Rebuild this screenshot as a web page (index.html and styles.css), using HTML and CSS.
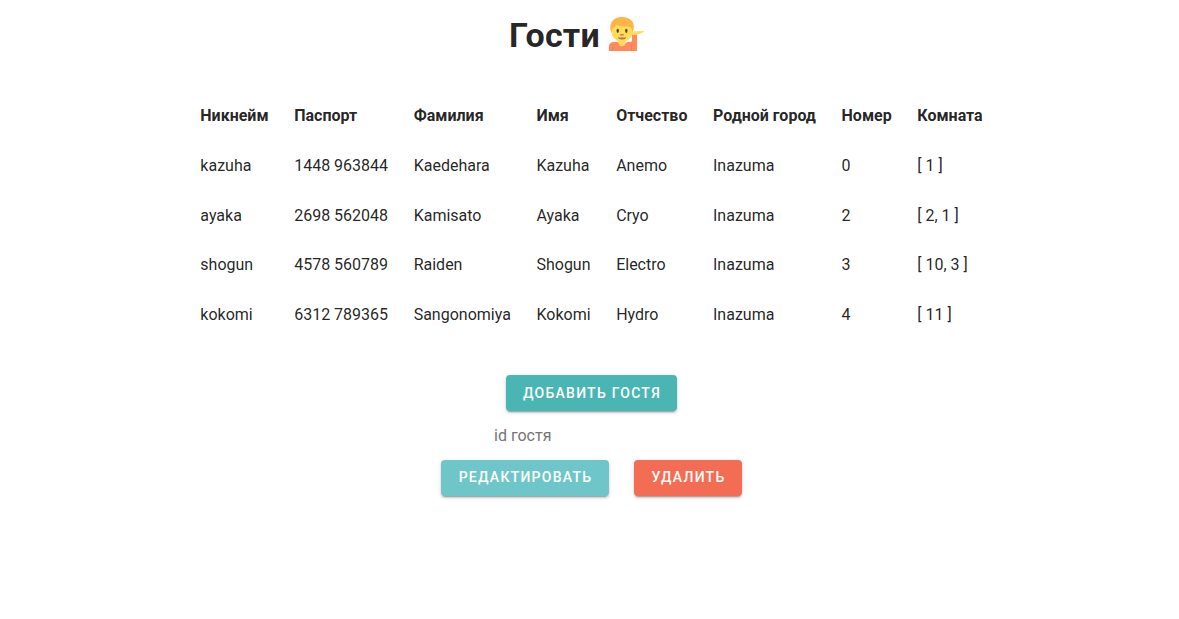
FILE: index.html
```html
<!DOCTYPE html>
<html lang="ru">
<head>
<meta charset="utf-8">
<title>Гости</title>
<link rel="stylesheet" href="styles.css">
</head>
<body>
<main class="page">
  <h1 class="title">Гости
    <svg class="title-icon" viewBox="0 0 36 36" aria-hidden="true">
      <path fill="#ff8a5e" d="M1 35v-4.500C1 27.500 3 26 6 26h3.500l5 3 5-3h3c1.200 0 1.500-.8 1.500-2v-7h5v18z"/>
      <path fill="#f27a52" d="M4.700 31h.9v4h-.9zM23.300 29h.9v6h-.9z"/>
      <path fill="#ffdc5d" d="M10.500 22h7v6c-1.500 3-5.500 3-7 0z"/>
      <path fill="#ffb445" d="M14 1C7 .8 2.200 5.500 2.300 11.500c0 3 .8 5.200 2.200 6.500h19c1.500-1.800 2.300-4.500 2.300-7.500C25.800 5 21 1 14 1z"/>
      <path fill="#ffdc5d" d="M3.700 14.500c.3-1.500 1.300-2.700 3-3.500 1-.5 1.500-1.200 2-2.200 3 1.700 6.500 2 10.800 1.700 2.800 0 4.300 1.500 4.700 4C25 21 20.500 25.500 14 25.500S3 21 3.700 14.500z"/>
      <path fill="#ffdc5d" d="M23 18c.5-2 2-2.700 4-2.700l8-.3c1.200 0 1.200 1 .2 1.300l-3.200 1.500c-2 1-4 1.200-5.500 1.200H23z"/>
      <ellipse cx="9.700" cy="14.800" rx="1.200" ry="2.100" fill="#664500"/>
      <ellipse cx="18.300" cy="14.800" rx="1.200" ry="2.100" fill="#664500"/>
      <path fill="#c1694f" d="M12.300 18.300h3.400v1.200h-3.400zM9.500 21.500h9c-1.200 2.500-7.800 2.500-9 0z"/>
    </svg>
  </h1>
  <table class="guests">
    <thead><tr><th>Никнейм</th><th>Паспорт</th><th>Фамилия</th><th>Имя</th><th>Отчество</th><th>Родной город</th><th>Номер</th><th>Комната</th></tr></thead>
    <tbody>
      <tr><td>kazuha</td><td>1448 963844</td><td>Kaedehara</td><td>Kazuha</td><td>Anemo</td><td>Inazuma</td><td>0</td><td>[ 1 ]</td></tr>
      <tr><td>ayaka</td><td>2698 562048</td><td>Kamisato</td><td>Ayaka</td><td>Cryo</td><td>Inazuma</td><td>2</td><td>[ 2, 1 ]</td></tr>
      <tr><td>shogun</td><td>4578 560789</td><td>Raiden</td><td>Shogun</td><td>Electro</td><td>Inazuma</td><td>3</td><td>[ 10, 3 ]</td></tr>
      <tr><td>kokomi</td><td>6312 789365</td><td>Sangonomiya</td><td>Kokomi</td><td>Hydro</td><td>Inazuma</td><td>4</td><td>[ 11 ]</td></tr>
    </tbody>
  </table>
  <button class="btn btn-add">Добавить гостя</button>
  <input class="guest-id" type="text" placeholder="id гостя">
  <div class="actions">
    <button class="btn btn-edit">Редактировать</button>
    <button class="btn btn-delete">Удалить</button>
  </div>
</main>
</body>
</html>
```
FILE: styles.css
```css
* { box-sizing: border-box; }
body { margin: 0; background: #fff; color: rgba(0,0,0,.87); font: 16px/24px Roboto, sans-serif; }
.page { display: flex; flex-direction: column; align-items: center; min-height: 100vh; padding: 11px 0 0 4px; }
.title { display: flex; align-items: center; gap: 8px; margin: 0 30px 0 0; font-size: 34px; line-height: 48px; font-weight: 700; letter-spacing: .25px; }
.title-icon { width: 36px; height: 36px; margin-top: -2px; }
.guests { margin: 32.6px 0 0; border-collapse: collapse; }
.guests th, .guests td { padding: 12.8px; text-align: left; white-space: nowrap; }
.guests th { font-weight: 700; }
.btn { height: 36px; padding: 0 15px 0 16px; border: 0; border-radius: 4px; color: #fff; font: 500 14px/36px Roboto, sans-serif; letter-spacing: 1.25px; text-transform: uppercase; white-space: nowrap; box-shadow: 0 3px 1px -2px rgba(0,0,0,.2), 0 2px 2px rgba(0,0,0,.14), 0 1px 5px rgba(0,0,0,.12); }
.btn-add { width: 171px; margin-top: 35.4px; background: #4ab6b3; }
.guest-id { width: 195px; height: 24px; margin-top: 13px; padding: 0; border: 0; background: none; font: 16px/24px Roboto, sans-serif; }
.guest-id::placeholder { color: #757575; }
.actions { display: flex; gap: 25px; margin-top: 12px; }
.actions .btn { line-height: 34px; padding-bottom: 2px; }
.btn-edit { width: 168px; background: #6fc6c8; }
.btn-delete { width: 108px; background: #f36c54; }
```
